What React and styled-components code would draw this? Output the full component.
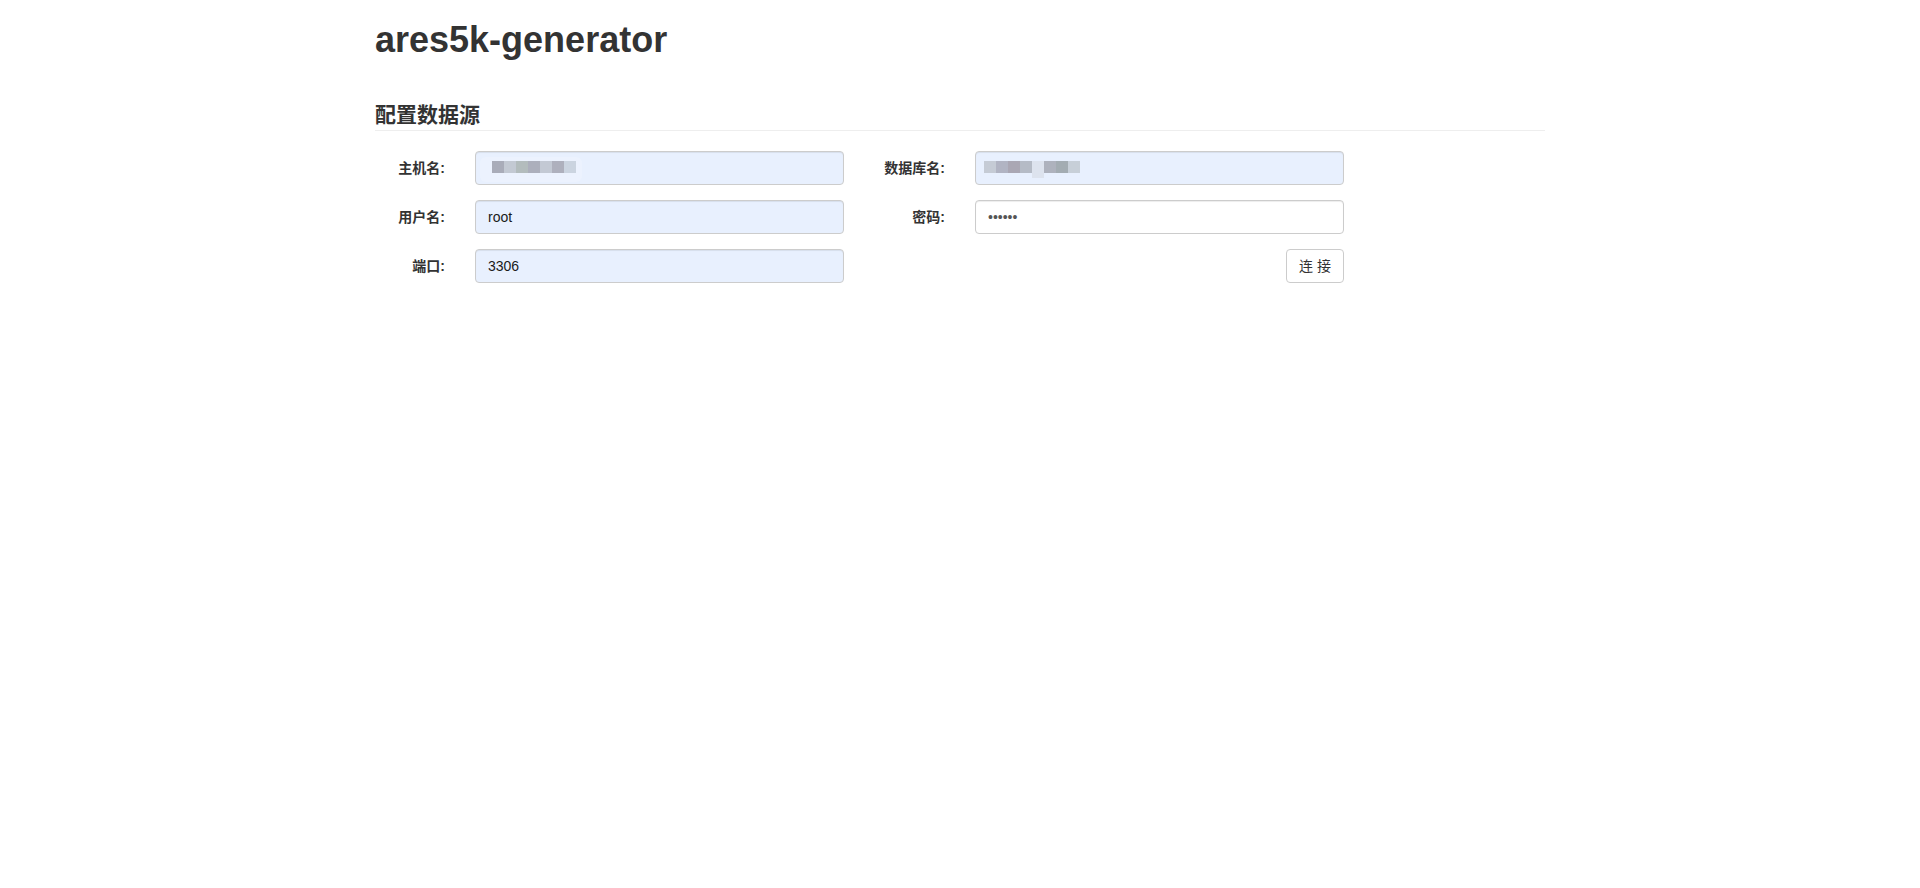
import React from "react";
import styled, { createGlobalStyle } from "styled-components";

const GlobalStyle = createGlobalStyle`
  html, body {
    margin: 0;
    padding: 0;
    background: #fff;
  }

  body {
    font-family: "Liberation Sans", "Noto Sans CJK SC", sans-serif;
    font-size: 14px;
    line-height: 1.42857;
    color: #333;
  }

  * {
    box-sizing: border-box;
  }
`;

const Container = styled.div`
  width: 1170px;
  margin: 0 auto;
`;

const Title = styled.h1`
  margin: 20px 0 0;
  font-size: 36px;
  line-height: 39.6px;
  font-weight: bold;
  color: #333;
`;

const SectionHeader = styled.h3`
  margin: 43px 0 20px;
  padding-bottom: 3px;
  font-size: 21px;
  line-height: 24px;
  font-weight: bold;
  color: #333;
  border-bottom: 1px solid #eee;
`;

const Form = styled.form`
  margin-left: -16px;
  display: grid;
  grid-template-columns: repeat(2, 500px);
  row-gap: 15px;
`;

const Field = styled.div`
  display: flex;
  align-items: flex-start;
`;

const Label = styled.label`
  width: 101px;
  padding: 7px 15px 0 0;
  text-align: right;
  font-weight: bold;
  font-size: 14px;
  line-height: 20px;
  color: #333;
`;

const Control = styled.div`
  position: relative;
  width: 399px;
  padding: 0 15px;
  display: flex;
  justify-content: ${({ $end }) => ($end ? "flex-end" : "flex-start")};
`;

const Input = styled.input`
  display: block;
  width: 100%;
  height: 34px;
  padding: 6px 12px;
  font-family: "Liberation Sans", "Noto Sans CJK SC", sans-serif;
  font-size: 14px;
  line-height: 20px;
  color: ${({ $autofill }) => ($autofill ? "#1a1a1a" : "#555")};
  background: ${({ $autofill }) => ($autofill ? "#e8f0fe" : "#fff")};
  border: 1px solid #ccc;
  border-radius: 4px;
  box-shadow: inset 0 1px 1px rgba(0, 0, 0, 0.075);
  outline: none;
`;

const Button = styled.button`
  height: 34px;
  padding: 6px 12px;
  font-family: "Liberation Sans", "Noto Sans CJK SC", sans-serif;
  font-size: 14px;
  line-height: 20px;
  color: #333;
  background: #fff;
  border: 1px solid #ccc;
  border-radius: 4px;
  cursor: pointer;
`;

/* pixelated (blurred-out) value drawn over an input */
const Mosaic = styled.div`
  position: absolute;
  left: ${({ $left }) => $left}px;
  top: 10px;
  display: flex;
  align-items: flex-start;
  padding: ${({ $pad }) => ($pad ? "0 6px 0 12px" : "0")};
  pointer-events: none;

  &::before {
    content: "";
    position: absolute;
    left: 0;
    right: 0;
    top: -4px;
    bottom: -9px;
    border-radius: 6px;
    background: ${({ $pad }) => ($pad ? "rgba(255,255,255,0.18)" : "transparent")};
  }
`;

const Pixel = styled.span`
  position: relative;
  width: 12px;
  height: ${({ $tall }) => ($tall ? 17 : 12)}px;
  background: ${({ $c }) => $c};
`;

const hostPixels = ["#a9acb9", "#c3c9d3", "#b3bcbd", "#acafbc", "#c3c9d4", "#aeb0bd", "#cbd4e0"];
const dbPixels = ["#c5cbd5", "#b1b4c3", "#aaa7b4", "#b5bbc6", "#dde3ee", "#aeb2bd", "#a3acb2", "#c7cfd8"];

const App = () => {
  return (
    <>
      <GlobalStyle />
      <Container>
        <Title>ares5k-generator</Title>
        <SectionHeader>配置数据源</SectionHeader>

        <Form onSubmit={(e) => e.preventDefault()}>
          <Field>
            <Label>主机名:</Label>
            <Control>
              <Input $autofill readOnly value="" />
              <Mosaic $left={20} $pad>
                {hostPixels.map((c, i) => (
                  <Pixel key={i} $c={c} />
                ))}
              </Mosaic>
            </Control>
          </Field>
          <Field>
            <Label>数据库名:</Label>
            <Control>
              <Input $autofill readOnly value="" />
              <Mosaic $left={24}>
                {dbPixels.map((c, i) => (
                  <Pixel key={i} $c={c} $tall={i === 4} />
                ))}
              </Mosaic>
            </Control>
          </Field>

          <Field>
            <Label>用户名:</Label>
            <Control>
              <Input $autofill readOnly value="root" />
            </Control>
          </Field>
          <Field>
            <Label>密码:</Label>
            <Control>
              <Input type="password" readOnly value="123456" />
            </Control>
          </Field>

          <Field>
            <Label>端口:</Label>
            <Control>
              <Input $autofill readOnly value="3306" />
            </Control>
          </Field>
          <Field>
            <Label />
            <Control $end>
              <Button type="button">连 接</Button>
            </Control>
          </Field>
        </Form>
      </Container>
    </>
  );
};

export default App;
